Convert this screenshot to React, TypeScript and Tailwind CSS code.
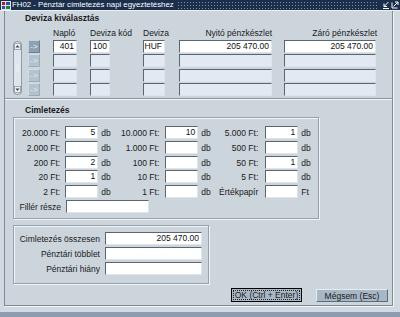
import React from "react";

const inpBase =
  "h-[13px] border border-t-[#5b6570] border-l-[#5b6570] border-r-[#dfe4ea] border-b-[#dfe4ea] text-right pr-[2px] leading-[11px] text-[#111] whitespace-nowrap overflow-hidden";

function Inp({ w, v, empty }: { w: string; v?: string; empty?: boolean }) {
  return <div className={`${inpBase} ${w} ${empty ? "bg-[#e3e9f3]" : "bg-white"}`}>{v ?? ""}</div>;
}

function Arrow({ active }: { active?: boolean }) {
  return (
    <div
      className={`w-[12px] h-[13px] flex items-center justify-center text-[8px] leading-[13px] border ${
        active
          ? "bg-[#8ca1b4] text-[#f4f6f8] border-t-[#c6d1dc] border-l-[#c6d1dc] border-r-[#6d8092] border-b-[#6d8092]"
          : "bg-[#b2c2cf] text-[#e9eef3] border-t-[#d3dce4] border-l-[#d3dce4] border-r-[#9aabb9] border-b-[#9aabb9]"
      }`}
    >
      -&gt;
    </div>
  );
}

function TopRow({ first }: { first?: boolean }) {
  return (
    <div className="flex">
      <Arrow active={first} />
      <div className="ml-[13px]"><Inp w="w-[24px]" v={first ? "401" : ""} empty={!first} /></div>
      <div className="ml-[13px]"><Inp w="w-[20px]" v={first ? "100" : ""} empty={!first} /></div>
      <div className="ml-[33px]"><Inp w="w-[22px]" v={first ? "HUF" : ""} empty={!first} /></div>
      <div className="ml-[14px]"><Inp w="w-[93px]" v={first ? "205 470.00" : ""} empty={!first} /></div>
      <div className="ml-[12px]"><Inp w="w-[92px]" v={first ? "205 470.00" : ""} empty={!first} /></div>
    </div>
  );
}

function fix(v: string) {
  return v;
}

function CimRow({ cells }: { cells: [string, string, string][] }) {
  const lw = ["w-[47px]", "w-[40px]", "w-[40px]"];
  const gap = ["ml-[5px]", "ml-[6px]", "ml-[7px]"];
  const dw = ["w-[22px]", "w-[21px]", "w-[20px]"];
  return (
    <div className="flex h-[13px] items-center">
      {cells.map((c, i) => (
        <React.Fragment key={i}>
          <div className={`${lw[i]} text-right whitespace-nowrap`}>{c[0]}</div>
          <div className={gap[i]}>
            <Inp w="w-[33px]" v={fix(c[1])} />
          </div>
          <div className={`${dw[i]} pl-[3px] whitespace-nowrap`}>{c[2]}</div>
        </React.Fragment>
      ))}
    </div>
  );
}

function Scrollbar() {
  return (
    <div className="w-[9px] h-[54px] mt-[1px] rounded-[4px] border border-[#8f9ba8] bg-[#dfe5ec] flex flex-col items-center justify-between py-[1px]">
      <svg width="7" height="7" viewBox="0 0 7 7">
        <rect x="0.5" y="0.5" width="6" height="6" fill="#eef2f6" stroke="#9aa6b3" />
        <path d="M1.5 4.5 L3.5 2 L5.5 4.5 Z" fill="#3a4450" />
      </svg>
      <svg width="5" height="10" viewBox="0 0 5 10">
        <path d="M1 1h1M3 2h1M1 3h1M3 4h1M1 5h1M3 6h1M1 7h1M3 8h1" stroke="#f6f8fa" strokeWidth="1" />
      </svg>
      <svg width="7" height="7" viewBox="0 0 7 7">
        <rect x="0.5" y="0.5" width="6" height="6" fill="#eef2f6" stroke="#9aa6b3" />
        <path d="M1.5 2.5 L3.5 5 L5.5 2.5 Z" fill="#3a4450" />
      </svg>
    </div>
  );
}

export default function App() {
  return (
    <div className="w-[400px] h-[317px] bg-[#d3d9e0] overflow-hidden flex flex-col font-['Liberation_Sans',Arial,sans-serif] text-[8.5px] leading-[10px] text-[#1a1a1a]">
      {/* title bar */}
      <div className="h-[10px] bg-[#1b2f4c] flex items-center text-white border-b border-b-[#eef1f4] box-content">
        <svg width="10" height="9" viewBox="0 0 10 9" className="ml-[1px]">
          <rect x="0" y="0" width="10" height="9" fill="#dfe3e8" />
          <rect x="1" y="1" width="3" height="3" fill="#b02020" />
          <rect x="5" y="1" width="4" height="3" fill="#3050a0" />
          <rect x="1" y="5" width="3" height="3" fill="#3050a0" />
          <rect x="5" y="5" width="4" height="3" fill="#208040" />
        </svg>
        <span className="ml-[1px] text-[7.8px] leading-[10px] whitespace-nowrap">FH02 - Pénztár címletezés napi egyeztetéshez</span>
        <div className="ml-[3px] flex-1 h-[8px] bg-[radial-gradient(circle,#7d90aa_0.8px,transparent_0.9px)] bg-[length:3px_3px]" />
        <svg width="8" height="8" viewBox="0 0 8 8" className="ml-[3px]">
          <path d="M1 7.5H7" stroke="#fff" strokeWidth="1" />
          <path d="M6.5 1 L2 5.5 M2 2.5 V5.5 H5" stroke="#fff" strokeWidth="1" fill="none" />
        </svg>
        <svg width="8" height="8" viewBox="0 0 8 8" className="ml-[1px] mr-[1px]">
          <path d="M1 1.5 V7 H6.5" stroke="#fff" strokeWidth="1" fill="none" />
          <path d="M2.5 5.5 L7 1 M4 1 H7 V4" stroke="#fff" strokeWidth="1" fill="none" />
        </svg>
      </div>

      {/* window */}
      <div className="ml-[4px] w-[389px] h-[296px] border-l border-r border-b border-[#7f8a96] bg-[#ccd4dc] shadow-[1px_1px_0_#f2f5f8] flex flex-col">
        {/* top panel */}
        <div className="h-[88px] border-b border-b-[#8a95a1] shadow-[0_1px_0_#f4f6f9] flex flex-col shrink-0">
          <div className="mt-[2px] pl-[20px] font-bold whitespace-nowrap">Deviza kiválasztás</div>
          <div className="mt-[5px] flex ml-[48px] whitespace-nowrap">
            <div className="w-[37px]">Napló</div>
            <div className="w-[53px]">Deviza kód</div>
            <div className="w-[22px]">Deviza</div>
            <div className="ml-[14px] w-[93px] text-right">Nyitó pénzkészlet</div>
            <div className="ml-[12px] w-[93px] text-right">Záró pénzkészlet</div>
          </div>
          <div className="mt-[2px] flex ml-[8px]">
            <Scrollbar />
            <div className="ml-[6px] flex flex-col">
              <TopRow first />
              <div className="mt-[1px]"><TopRow /></div>
              <div className="mt-[2px]"><TopRow /></div>
              <div className="mt-[1px]"><TopRow /></div>
            </div>
          </div>
        </div>

        {/* bottom panel */}
        <div className="flex flex-col pt-[6px] pl-[8px]">
          <div className="pl-[12px] font-bold whitespace-nowrap">Cimletezés</div>
          <div className="mt-[2px] w-[306px] h-[102px] border border-[#96a1ad] shadow-[inset_1px_1px_0_#f2f5f8,1px_1px_0_#f2f5f8] pt-[8px] flex flex-col">
            <CimRow cells={[["20.000 Ft:", "5", "db"], ["10.000 Ft:", "10", "db"], ["5.000 Ft:", "1", "db"]]} />
            <div className="mt-[2px]"><CimRow cells={[["2.000 Ft:", "", "db"], ["1.000 Ft:", "", "db"], ["500 Ft:", "", "db"]]} /></div>
            <div className="mt-[2px]"><CimRow cells={[["200 Ft:", "2", "db"], ["100 Ft:", "", "db"], ["50 Ft:", "1", "db"]]} /></div>
            <div className="mt-[1px]"><CimRow cells={[["20 Ft:", "1", "db"], ["10 Ft:", "", "db"], ["5 Ft:", "", "db"]]} /></div>
            <div className="mt-[2px]"><CimRow cells={[["2 Ft:", "", "db"], ["1 Ft:", "", "db"], ["Értékpapír", "", "Ft"]]} /></div>
            <div className="mt-[2px] flex h-[13px] items-center">
              <div className="w-[47px] text-right whitespace-nowrap">Fillér része</div>
              <div className="ml-[5px]"><Inp w="w-[83px]" /></div>
            </div>
          </div>

          <div className="mt-[6px] w-[196px] h-[59px] border border-[#96a1ad] shadow-[inset_1px_1px_0_#f2f5f8,1px_1px_0_#f2f5f8] pt-[6px] flex flex-col">
            <div className="flex h-[13px] items-center">
              <div className="w-[86px] text-right whitespace-nowrap">Cimletezés összesen</div>
              <div className="ml-[5px]"><Inp w="w-[97px]" v="205 470.00" /></div>
            </div>
            <div className="mt-[2px] flex h-[13px] items-center">
              <div className="w-[86px] text-right whitespace-nowrap">Pénztári többlet</div>
              <div className="ml-[5px]"><Inp w="w-[97px]" /></div>
            </div>
            <div className="mt-[2px] flex h-[13px] items-center">
              <div className="w-[86px] text-right whitespace-nowrap">Pénztári hiány</div>
              <div className="ml-[5px]"><Inp w="w-[97px]" /></div>
            </div>
          </div>

          <div className="mt-[4px] flex ml-[218px]">
            <div className="w-[71px] h-[14px] border border-black bg-[#a9b8c6] p-[1px]">
              <div className="h-full border border-dotted border-[#222] flex items-center justify-center leading-[10px] whitespace-nowrap">
                OK (Ctrl + Enter)
              </div>
            </div>
            <div className="ml-[14px] mt-[1px] w-[72px] h-[13px] border border-t-[#e6ebf0] border-l-[#e6ebf0] border-r-[#5e6b79] border-b-[#5e6b79] bg-[#a8b7c5] flex items-center justify-center leading-[10px] whitespace-nowrap">
              Mégsem (Esc)
            </div>
          </div>
        </div>
      </div>
      <div className="mt-[6px] h-[5px] bg-[#8d9cae]" />
    </div>
  );
}
